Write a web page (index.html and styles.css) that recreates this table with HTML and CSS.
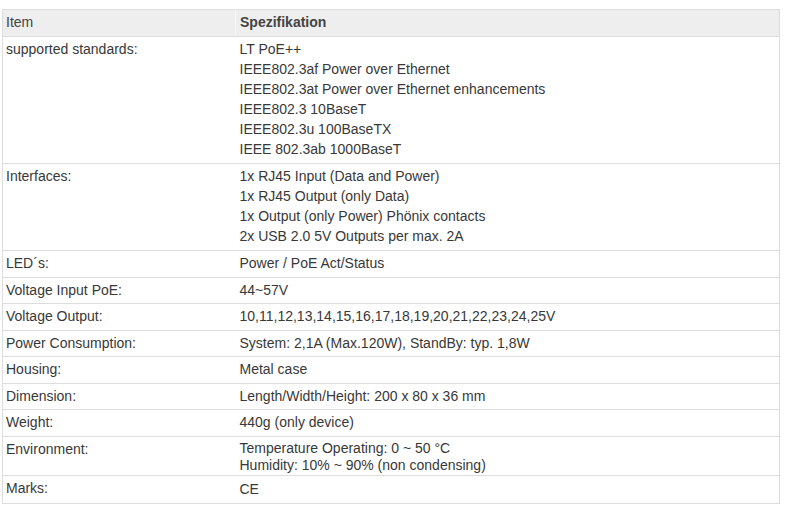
FILE: index.html
```html
<!DOCTYPE html>
<html>
<head>
<meta charset="utf-8">
<link rel="stylesheet" href="styles.css">
</head>
<body>
<div class="page">
<table class="spec">
  <thead>
    <tr><th class="c1">Item</th><th class="c2">Spezifikation</th></tr>
  </thead>
  <tbody>
    <tr class="multi"><td class="c1">supported standards:</td><td class="c2">LT PoE++<br>IEEE802.3af Power over Ethernet<br>IEEE802.3at Power over Ethernet enhancements<br>IEEE802.3 10BaseT<br>IEEE802.3u 100BaseTX<br>IEEE 802.3ab 1000BaseT</td></tr>
    <tr class="multi"><td class="c1">Interfaces:</td><td class="c2">1x RJ45 Input (Data and Power)<br>1x RJ45 Output (only Data)<br>1x Output (only Power) Phönix contacts<br>2x USB 2.0 5V Outputs per max. 2A</td></tr>
    <tr><td class="c1">LED´s:</td><td class="c2">Power / PoE Act/Status</td></tr>
    <tr><td class="c1">Voltage Input PoE:</td><td class="c2">44~57V</td></tr>
    <tr><td class="c1">Voltage Output:</td><td class="c2">10,11,12,13,14,15,16,17,18,19,20,21,22,23,24,25V</td></tr>
    <tr><td class="c1">Power Consumption:</td><td class="c2">System: 2,1A (Max.120W), StandBy: typ. 1,8W</td></tr>
    <tr><td class="c1">Housing:</td><td class="c2">Metal case</td></tr>
    <tr><td class="c1">Dimension:</td><td class="c2">Length/Width/Height: 200 x 80 x 36 mm</td></tr>
    <tr><td class="c1">Weight:</td><td class="c2">440g (only device)</td></tr>
    <tr class="env"><td class="c1">Environment:</td><td class="c2">Temperature Operating: 0 ~ 50 °C<br>Humidity: 10% ~ 90% (non condensing)</td></tr>
    <tr class="last"><td class="c1">Marks:</td><td class="c2 low">CE</td></tr>
  </tbody>
</table>
</div>
</body>
</html>
```

FILE: styles.css
```css
html, body {
  margin: 0;
  padding: 0;
  background: #ffffff;
}

.page {
  padding: 9px 0 0 2px;
}

.spec {
  width: 778px;
  border-collapse: collapse;
  border: 1px solid #dddddd;
  font-family: "Liberation Sans", Arial, Helvetica, sans-serif;
  font-size: 14px;
  color: #383838;
}

.spec th {
  background: #eeeeee;
  text-align: left;
  font-weight: normal;
  line-height: 20px;
  padding: 2px 4px 4px 3px;
  border-bottom: 1px solid #dddddd;
  color: #444444;
}

.spec th.c2 {
  font-weight: bold;
  border-left: 1px solid #f8f8f8;
  padding-left: 4px;
}

.spec td {
  vertical-align: top;
  text-align: left;
  line-height: 20px;
  padding: 2px 4px 3.5px 3px;
  border-bottom: 1px solid #dddddd;
}

.spec .c1 {
  width: 225px;
}

.spec td.c2 {
  padding-left: 4px;
}

.spec tr.multi td {
  padding-bottom: 4px;
}

.spec tr.env td.c2 {
  line-height: 17px;
  padding-top: 3px;
  padding-bottom: 1px;
}

.spec tr.last td {
  padding-bottom: 4px;
}

.spec td.low {
  padding-top: 3px;
  padding-bottom: 3px;
}
```
